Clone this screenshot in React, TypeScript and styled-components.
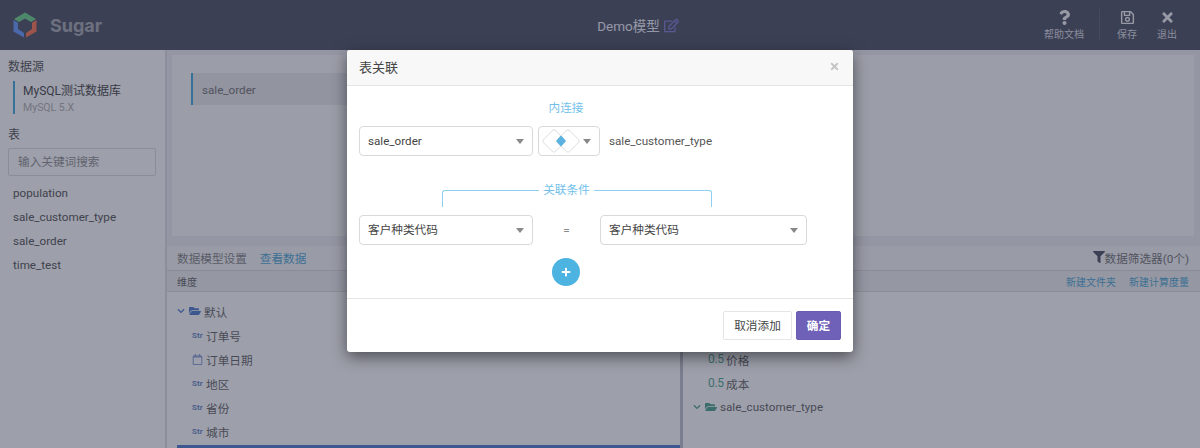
import React from 'react';
import styled, { createGlobalStyle } from 'styled-components';
import { FaChevronDown, FaFilter, FaFolderOpen, FaPlus, FaQuestion, FaRegCalendar, FaRegEdit, FaRegSave, FaTimes } from 'react-icons/fa';

const Global = createGlobalStyle`
  html, body { margin: 0; padding: 0; height: 100%; overflow: hidden; }
  body { font-family: Roboto, "Noto Sans CJK SC", sans-serif; font-size: 11.65px; color: #555; background: #fff; }
  * { box-sizing: border-box; }
`;

const Page = styled.div`
  position: relative;
  width: 1200px;
  height: 448px;
  overflow: hidden;
  display: flex;
  flex-direction: column;
`;

const Header = styled.header`
  height: 50px;
  flex: none;
  display: flex;
  align-items: center;
  justify-content: space-between;
  padding: 0 13px;
  background: #3c4052;
`;
const Brand = styled.div`
  display: flex;
  align-items: center;
  gap: 13px;
  width: 300px;
`;
const BrandName = styled.span`
  font-family: Inter, "Liberation Sans", sans-serif;
  font-size: 18px;
  font-weight: 700;
  color: #fff;
  opacity: .5;
`;
const Title = styled.div`
  display: flex;
  align-items: center;
  gap: 4px;
  font-size: 13.5px;
  color: #eceef8;
  margin-left: 76px;
`;
const EditIcon = styled(FaRegEdit)`
  font-size: 15px;
  color: #7b6fd0;
`;
const Actions = styled.div`
  width: 300px;
  display: flex;
  justify-content: flex-end;
  align-items: center;
`;
const Action = styled.div<{ $divided?: boolean }>`
  display: flex;
  flex-direction: column;
  align-items: center;
  gap: 4px;
  font-size: 10px;
  line-height: 12px;
  color: #d8dae0;
  width: ${p => (p.$divided ? '60px' : '40px')};
  padding-right: ${p => (p.$divided ? '11px' : '0')};
  height: 32px;
  justify-content: flex-end;
  border-right: ${p => (p.$divided ? '1px solid #50546a' : '0')};
  margin-right: ${p => (p.$divided ? '7px' : '0')};
  svg { font-size: 15px; color: #f2f2f5; }
`;

const Body = styled.div`
  flex: 1;
  display: flex;
  min-height: 0;
`;
const Sidebar = styled.aside`
  width: 167px;
  flex: none;
  background: #fff;
  border-right: 2px solid #dcdde2;
  padding: 10px 8px 0;
`;
const SideTitle = styled.div`
  font-size: 12px;
  line-height: 14px;
  color: #444;
`;
const Source = styled.div`
  margin: 7px 0 14px 5px;
  height: 33px;
  padding-left: 8px;
  border-left: 2px solid #35a3d8;
  display: flex;
  flex-direction: column;
  gap: 2px;
  padding-top: 2px;
`;
const SourceName = styled.div`
  font-size: 12px;
  line-height: 17px;
  color: #333;
`;
const SourceType = styled.div`
  font-size: 10.5px;
  line-height: 12px;
  color: #aaa;
`;
const Search = styled.input`
  display: block;
  width: 148px;
  height: 28px;
  margin: 6px 0 5px;
  padding: 0 9px;
  font: inherit;
  border: 1px solid #d8d9de;
  border-radius: 2px;
  background: #fff;
  &::placeholder { color: #888; opacity: 1; }
`;
const TableItem = styled.div`
  height: 24px;
  line-height: 24px;
  padding-left: 5px;
  color: #444;
`;

const Main = styled.main`
  flex: 1;
  min-width: 0;
  display: flex;
  flex-direction: column;
  background: #ecedf0;
`;
const CanvasWrap = styled.div`
  flex: none;
  padding: 5px 6px 10px 5px;
`;
const Canvas = styled.div`
  height: 181px;
  padding: 18px 19px;
  background: #fafafb;
`;
const TableTag = styled.div`
  width: 180px;
  height: 32px;
  line-height: 34px;
  padding-left: 9px;
  border-left: 2px solid #35a3d8;
  background: #e8e8ea;
  color: #666;
`;
const ModelBar = styled.div`
  height: 25px;
  flex: none;
  display: flex;
  align-items: center;
  justify-content: space-between;
  padding: 0 11px 2px 10px;
  background: #f7f7f8;
  border-bottom: 1px solid #dadbe0;
  color: #777;
`;
const ModelBarLeft = styled.div`
  display: flex;
  gap: 13px;
`;
const LinkText = styled.span`
  color: #3a9fd0;
`;
const FilterText = styled.div`
  display: flex;
  align-items: center;
  color: #666;
  svg { font-size: 12px; color: #3d4152; }
`;
const Columns = styled.div`
  flex: 1;
  display: flex;
  min-height: 0;
  background: #fff;
`;
const Column = styled.section<{ $w?: number }>`
  flex: ${p => (p.$w ? `0 0 ${p.$w}px` : '1')};
  min-width: 0;
  & + & { border-left: 3px solid #b9bbc4; }
`;
const ColumnHead = styled.div`
  height: 21px;
  display: flex;
  align-items: center;
  justify-content: space-between;
  padding: 0 11px 0 10px;
  background: #eeeff1;
  border-bottom: 1px solid #dadbe0;
  font-size: 10px;
  color: #555;
`;
const HeadLinks = styled.div`
  display: flex;
  gap: 13px;
  color: #3a9fd0;
`;
const Tree = styled.div`
  padding: 7px 0 0 10px;
`;
const Row = styled.div<{ $depth?: number }>`
  height: 24px;
  display: flex;
  align-items: center;
  gap: 3px;
  padding-left: ${p => (p.$depth ? '15px' : '0')};
  color: #555;
`;
const Chevron = styled(FaChevronDown)<{ $color: string }>`
  font-size: 8px;
  margin-right: 1px;
  color: ${p => p.$color};
`;
const Folder = styled(FaFolderOpen)<{ $color: string }>`
  font-size: 12px;
  color: ${p => p.$color};
`;
const StrTag = styled.span`
  width: 11px;
  font-size: 8px;
  font-weight: 700;
  color: #5b7fc4;
  white-space: nowrap;
`;
const CalIcon = styled(FaRegCalendar)`
  width: 11px;
  font-size: 11px;
  color: #7f9ad0;
`;
const NumTag = styled.span`
  font-size: 12px;
  color: #3d9a85;
  width: 15px;
  letter-spacing: -.3px;
`;
const Selected = styled.div`
  height: 24px;
  margin-top: 2px;
  background: #3f70c8;
`;

const Backdrop = styled.div`
  position: absolute;
  inset: 0;
  background: rgba(60, 64, 85, .5);
`;
const Modal = styled.div`
  position: absolute;
  left: 347px;
  top: 50px;
  width: 506px;
  height: 302px;
  display: flex;
  flex-direction: column;
  background: #fff;
  border-radius: 3px;
  box-shadow: 0 5px 15px rgba(0, 0, 0, .5);
`;
const ModalHead = styled.div`
  height: 36px;
  flex: none;
  display: flex;
  align-items: center;
  justify-content: space-between;
  padding: 0 13px 2px 12px;
  background: #f8f8f8;
  border-bottom: 1px solid #e5e5e5;
  border-radius: 3px 3px 0 0;
  font-size: 13px;
  color: #444;
`;
const Close = styled(FaTimes)`
  font-size: 11px;
  color: #c4c4c4;
`;
const ModalBody = styled.div`
  flex: 1;
  padding: 14px 12px 0;
`;
const JoinLabel = styled.div`
  width: 414px;
  margin-bottom: 9px;
  text-align: center;
  line-height: 17px;
  color: #72bfe9;
`;
const FormRow = styled.div`
  display: flex;
  align-items: center;
  height: 30px;
`;
const Select = styled.div<{ $w: number; $cjk?: boolean }>`
  position: relative;
  width: ${p => p.$w}px;
  height: 30px;
  display: flex;
  align-items: center;
  padding-left: 8px;
  padding-bottom: ${p => (p.$cjk ? '3px' : '0')};
  border: 1px solid #d9d9d9;
  border-radius: 4px;
  color: #444;
  background: #fff;
  &::after {
    content: "";
    position: absolute;
    right: 8px;
    top: 12px;
    border: 4.5px solid transparent;
    border-top: 5px solid #888;
    border-bottom: 0;
  }
`;
const JoinSelect = styled(Select)`
  margin: 0 9px 0 5px;
  padding-left: 2px;
`;
const Bracket = styled.div`
  display: flex;
  width: 270px;
  height: 18px;
  margin: 33px 0 8px 83px;
`;
const BracketSide = styled.div<{ $side: 'left' | 'right'; $w?: number }>`
  flex: ${p => (p.$w ? `0 0 ${p.$w}px` : '1')};
  margin-top: 1px;
  border-top: 1px solid #8fd0f0;
  ${p => (p.$side === 'left'
    ? 'border-left: 1px solid #8fd0f0; border-top-left-radius: 3px;'
    : 'border-right: 1px solid #8fd0f0; border-top-right-radius: 3px;')}
`;
const BracketLabel = styled.div`
  flex: 0 0 55px;
  text-align: center;
  line-height: 1;
  margin-top: -4px;
  color: #72bfe9;
`;
const Equals = styled.div`
  width: 67px;
  text-align: center;
  color: #888;
`;
const AddWrap = styled.div`
  width: 414px;
  display: flex;
  justify-content: center;
  margin-top: 13px;
`;
const AddBtn = styled.button`
  width: 28px;
  height: 28px;
  padding: 0;
  border: 0;
  border-radius: 50%;
  background: #4db3e0;
  color: #fff;
  display: flex;
  align-items: center;
  justify-content: center;
  font-size: 10px;
`;
const ModalFoot = styled.div`
  height: 54px;
  flex: none;
  display: flex;
  align-items: center;
  justify-content: flex-end;
  gap: 4px;
  padding: 0 12px 0 0;
  border-top: 1px solid #e5e5e5;
`;
const Btn = styled.button<{ $primary?: boolean }>`
  height: 29px;
  padding: 0 0 2px;
  width: ${p => (p.$primary ? '45px' : '69px')};
  font: inherit;
  border-radius: 2px;
  border: 1px solid ${p => (p.$primary ? '#6a5db0' : '#e5e5e5')};
  background: ${p => (p.$primary ? '#6f60b8' : '#fff')};
  color: ${p => (p.$primary ? '#fff' : '#444')};
  font-weight: ${p => (p.$primary ? 700 : 400)};
`;

const Logo = () => (
  <svg width="24" height="26" viewBox="0 0 24 26" aria-hidden="true">
    <path d="M12 0.5 L23 7 L18 10 L12 6.5 L6 10 L1 7 Z" fill="#60d080" />
    <path d="M0.5 8 L5 10.8 L5 17 L11 21 L11 25.5 L0.5 19.5 Z" fill="#5a90ff" />
    <path d="M23.5 8 L23.5 19.5 L13 25.5 L13 21 L19 17 L19 10.8 Z" fill="#ff6a40" />
  </svg>
);

const JoinIcon = () => (
  <svg width="40" height="24" viewBox="0 0 40 24" aria-hidden="true">
    <rect x="4.5" y="3.5" width="17" height="17" rx="2.5" transform="rotate(45 13 12)" fill="none" stroke="#e2e2e2" />
    <rect x="18.5" y="3.5" width="17" height="17" rx="2.5" transform="rotate(45 27 12)" fill="none" stroke="#e2e2e2" />
    <path d="M20 7.5 L24 12 L20 16.5 L16 12 Z" fill="#5cb2e0" stroke="#5cb2e0" strokeWidth="1.5" strokeLinejoin="round" />
  </svg>
);

const dims: [string, boolean][] = [['订单号', false], ['订单日期', true], ['地区', false], ['省份', false], ['城市', false]];

export default function App() {
  return (
    <Page>
      <Global />
      <Header>
        <Brand><Logo /><BrandName>Sugar</BrandName></Brand>
        <Title>Demo模型<EditIcon /></Title>
        <Actions>
          <Action $divided><FaQuestion />帮助文档</Action>
          <Action><FaRegSave />保存</Action>
          <Action><FaTimes />退出</Action>
        </Actions>
      </Header>
      <Body>
        <Sidebar>
          <SideTitle>数据源</SideTitle>
          <Source>
            <SourceName>MySQL测试数据库</SourceName>
            <SourceType>MySQL 5.X</SourceType>
          </Source>
          <SideTitle>表</SideTitle>
          <Search placeholder="输入关键词搜索" />
          {['population', 'sale_customer_type', 'sale_order', 'time_test'].map(t => <TableItem key={t}>{t}</TableItem>)}
        </Sidebar>
        <Main>
          <CanvasWrap>
            <Canvas><TableTag>sale_order</TableTag></Canvas>
          </CanvasWrap>
          <ModelBar>
            <ModelBarLeft>数据模型设置<LinkText>查看数据</LinkText></ModelBarLeft>
            <FilterText><FaFilter />数据筛选器(0个)</FilterText>
          </ModelBar>
          <Columns>
            <Column $w={513}>
              <ColumnHead>维度</ColumnHead>
              <Tree>
                <Row><Chevron $color="#3f70c8" /><Folder $color="#3f70c8" />默认</Row>
                {dims.map(([name, date]) => (
                  <Row $depth={1} key={name}>{date ? <CalIcon /> : <StrTag>Str</StrTag>}{name}</Row>
                ))}
                <Selected />
              </Tree>
            </Column>
            <Column>
              <ColumnHead>度量<HeadLinks><span>新建文件夹</span><span>新建计算度量</span></HeadLinks></ColumnHead>
              <Tree>
                <Row />
                <Row />
                <Row $depth={1}><NumTag>0.5</NumTag>价格</Row>
                <Row $depth={1}><NumTag>0.5</NumTag>成本</Row>
                <Row><Chevron $color="#3d9a85" /><Folder $color="#3d9a85" />sale_customer_type</Row>
              </Tree>
            </Column>
          </Columns>
        </Main>
      </Body>
      <Backdrop />
      <Modal>
        <ModalHead>表关联<Close /></ModalHead>
        <ModalBody>
          <JoinLabel>内连接</JoinLabel>
          <FormRow>
            <Select $w={174}>sale_order</Select>
            <JoinSelect $w={62}><JoinIcon /></JoinSelect>
            sale_customer_type
          </FormRow>
          <Bracket>
            <BracketSide $side="left" $w={97} />
            <BracketLabel>关联条件</BracketLabel>
            <BracketSide $side="right" />
          </Bracket>
          <FormRow>
            <Select $w={174} $cjk>客户种类代码</Select>
            <Equals>=</Equals>
            <Select $w={207} $cjk>客户种类代码</Select>
          </FormRow>
          <AddWrap><AddBtn><FaPlus /></AddBtn></AddWrap>
        </ModalBody>
        <ModalFoot>
          <Btn>取消添加</Btn>
          <Btn $primary>确定</Btn>
        </ModalFoot>
      </Modal>
    </Page>
  );
}
